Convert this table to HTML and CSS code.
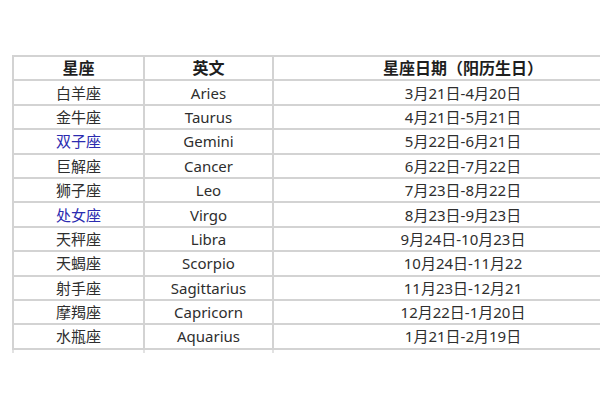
FILE: index.html
```html
<!DOCTYPE html>
<html lang="zh-CN">
<head>
<meta charset="utf-8">
<link rel="stylesheet" href="styles.css">
</head>
<body>
<div class="frame">
<table class="zodiac">
  <colgroup><col class="c1"><col class="c2"><col class="c3"></colgroup>
  <thead>
    <tr><th>星座</th><th>英文</th><th>星座日期（阳历生日）</th></tr>
  </thead>
  <tbody>
    <tr><td>白羊座</td><td>Aries</td><td>3月21日-4月20日</td></tr>
    <tr><td>金牛座</td><td>Taurus</td><td>4月21日-5月21日</td></tr>
    <tr><td class="link">双子座</td><td>Gemini</td><td>5月22日-6月21日</td></tr>
    <tr><td>巨解座</td><td>Cancer</td><td>6月22日-7月22日</td></tr>
    <tr><td>狮子座</td><td>Leo</td><td>7月23日-8月22日</td></tr>
    <tr><td class="link">处女座</td><td>Virgo</td><td>8月23日-9月23日</td></tr>
    <tr><td>天秤座</td><td>Libra</td><td>9月24日-10月23日</td></tr>
    <tr><td>天蝎座</td><td>Scorpio</td><td>10月24日-11月22</td></tr>
    <tr><td>射手座</td><td>Sagittarius</td><td>11月23日-12月21</td></tr>
    <tr><td>摩羯座</td><td>Capricorn</td><td>12月22日-1月20日</td></tr>
    <tr><td>水瓶座</td><td>Aquarius</td><td>1月21日-2月19日</td></tr>
    <tr class="tail"><td></td><td></td><td></td></tr>
  </tbody>
</table>
</div>
</body>
</html>
```
FILE: styles.css
```css
html, body {
  margin: 0;
  padding: 0;
  background: #ffffff;
}
.frame {
  width: 600px;
  height: 400px;
  overflow: hidden;
  padding-top: 55px;
  padding-left: 12px;
  box-sizing: border-box;
}
.zodiac {
  border-collapse: collapse;
  width: 640px;
  table-layout: fixed;
  font-family: "Noto Sans", "Noto Sans CJK SC", sans-serif;
  font-size: 15px;
  color: #2e2e2e;
}
.c1 { width: 131px; }
.c2 { width: 129px; }
.c3 { width: 380px; }
.zodiac th, .zodiac td {
  border: 2px solid #d3d3d3;
  height: 22.4px;
  padding: 0;
  text-align: center;
  vertical-align: middle;
  line-height: 20px;
}
.zodiac th {
  font-size: 16px;
  font-weight: bold;
  color: #1e1e1e;
}
.zodiac td.link {
  color: #2b2bb0;
}
.zodiac tr.tail td {
  height: 3px;
  line-height: 0;
  border-top: 2px solid #d3d3d3;
  border-bottom: none;
  border-left-color: #e2e2e2;
  border-right-color: #e2e2e2;
}
```
